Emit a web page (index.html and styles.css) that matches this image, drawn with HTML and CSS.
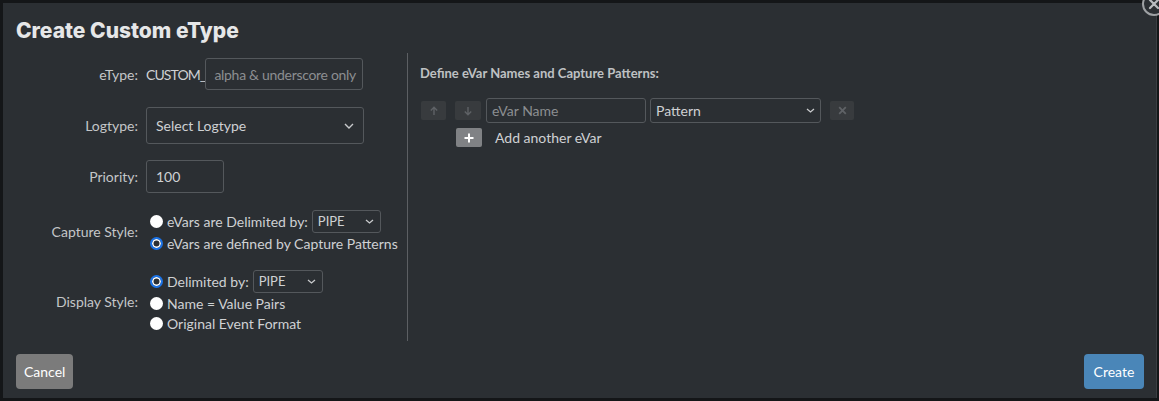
FILE: index.html
```html
<!DOCTYPE html>
<html>
<head>
<meta charset="utf-8">
<link rel="stylesheet" href="styles.css">
</head>
<body>
<div class="backdrop">
  <div class="modal">
    <span class="close-btn"><svg width="12" height="12" viewBox="0 0 12 12"><path d="M2 2L10 10M10 2L2 10" stroke="#b9bcbf" stroke-width="2.2" stroke-linecap="round"/></svg></span>
    <h1 class="title">Create Custom eType</h1>
    <div class="body">
      <div class="left">
        <div class="row r-etype">
          <div class="label">eType:</div>
          <div class="ctrl c-etype"><span class="prefix">CUSTOM_</span><div class="input w-etype placeholder">alpha &amp; underscore only</div></div>
        </div>
        <div class="row r-logtype">
          <div class="label">Logtype:</div>
          <div class="ctrl"><div class="select big w-logtype"><span>Select Logtype</span><svg width="10" height="6" viewBox="0 0 10 6"><path d="M1 1L5 5L9 1" fill="none" stroke="#c8cacc" stroke-width="1.4"/></svg></div></div>
        </div>
        <div class="row r-priority">
          <div class="label">Priority:</div>
          <div class="ctrl"><div class="input w-priority">100</div></div>
        </div>
        <div class="row r-capture">
          <div class="label">Capture Style:</div>
          <div class="ctrl stack">
            <div class="opt"><span class="radio"></span><span>eVars are Delimited by:</span><div class="select small w-pipe1"><span>PIPE</span><svg width="9" height="5" viewBox="0 0 9 5"><path d="M1 1L4.5 4L8 1" fill="none" stroke="#c8cacc" stroke-width="1.3"/></svg></div></div>
            <div class="opt"><span class="radio on"></span><span>eVars are defined by Capture Patterns</span></div>
          </div>
        </div>
        <div class="row r-display">
          <div class="label">Display Style:</div>
          <div class="ctrl stack">
            <div class="opt"><span class="radio on"></span><span>Delimited by:</span><div class="select small w-pipe2"><span>PIPE</span><svg width="9" height="5" viewBox="0 0 9 5"><path d="M1 1L4.5 4L8 1" fill="none" stroke="#c8cacc" stroke-width="1.3"/></svg></div></div>
            <div class="opt"><span class="radio"></span><span>Name = Value Pairs</span></div>
            <div class="opt"><span class="radio"></span><span>Original Event Format</span></div>
          </div>
        </div>
      </div>
      <div class="divider"></div>
      <div class="right">
        <div class="heading">Define eVar Names and Capture Patterns:</div>
        <div class="evar-row">
          <span class="sbtn"><svg width="10" height="10" viewBox="0 0 10 10"><path d="M5 9V1.5M1.8 4.5L5 1.3L8.2 4.5" fill="none" stroke="#5f6266" stroke-width="1.4"/></svg></span>
          <span class="sbtn"><svg width="10" height="10" viewBox="0 0 10 10"><path d="M5 1V8.5M1.8 5.5L5 8.7L8.2 5.5" fill="none" stroke="#5f6266" stroke-width="1.4"/></svg></span>
          <div class="input evar placeholder">eVar Name</div>
          <div class="select pattern"><span>Pattern</span><svg width="9" height="5" viewBox="0 0 9 5"><path d="M1 1L4.5 4L8 1" fill="none" stroke="#c8cacc" stroke-width="1.3"/></svg></div>
          <span class="sbtn xbtn"><svg width="9" height="9" viewBox="0 0 9 9"><path d="M1.2 1.2L7.8 7.8M7.8 1.2L1.2 7.8" stroke="#5f6266" stroke-width="1.8"/></svg></span>
        </div>
        <div class="add-row">
          <span class="plus"><svg width="10" height="10" viewBox="0 0 10 10"><path d="M5 0.5V9.5M0.5 5H9.5" stroke="#ffffff" stroke-width="2"/></svg></span>
          <span class="add-text">Add another eVar</span>
        </div>
      </div>
    </div>
    <div class="footer">
      <button class="btn cancel">Cancel</button>
      <button class="btn create">Create</button>
    </div>
  </div>
</div>
</body>
</html>
```
FILE: styles.css
```css
* { box-sizing: border-box; }
html, body { margin: 0; padding: 0; }
body {
  width: 1159px;
  height: 401px;
  overflow: hidden;
  background: #141618;
  font-family: "Source Sans Pro", "Lato", "Liberation Sans", sans-serif;
  font-size: 14px;
  color: #cfd1d3;
}
.backdrop { padding: 3px 2px 3px 3px; height: 401px; }
.modal {
  position: relative;
  height: 395px;
  background: #2b2f33;
  border-right: 1px solid #3a3e42;
  display: flex;
  flex-direction: column;
}
.close-btn {
  position: absolute;
  right: -10px;
  top: -11px;
  width: 24px;
  height: 24px;
  border-radius: 50%;
  border: 2px solid #9ea1a4;
  background: #2b2f33;
  display: flex;
  align-items: center;
  justify-content: center;
}
.title {
  margin: 0;
  padding: 15px 0 0 13px;
  height: 47px;
  font-family: "Inter", "Liberation Sans", sans-serif;
  font-weight: 800;
  font-size: 21px;
  letter-spacing: 0px;
  color: #e6e7e8;
}
.body { display: flex; height: 291px; }
.left { width: 404px; padding-top: 8px; }
.row { display: flex; align-items: center; }
.label { width: 143px; text-align: right; padding-right: 8px; color: #c4c6c8; }
.ctrl { display: flex; align-items: center; }
.c-etype { width: 217px; }
.prefix { margin-right: 0; color: #cfd1d3; letter-spacing: -0.9px; }
.input, .select {
  border: 1px solid #54585c;
  border-radius: 3px;
  background: #2b2f33;
  display: flex;
  align-items: center;
  padding: 0 9px;
  color: #cfd1d3;
  white-space: nowrap;
  overflow: hidden;
}
.placeholder { color: #8b8e91; }
.w-etype { flex: 1; height: 32px; padding: 0 6px 0 8px; letter-spacing: -0.3px; }
.w-logtype { width: 218px; height: 37px; justify-content: space-between; padding: 0 9px; }
.w-priority { width: 78px; height: 33px; }
.r-etype { height: 32px; }
.r-logtype { margin-top: 17px; }
.r-priority { margin-top: 16px; }
.r-capture { margin-top: 16px; }
.r-display { margin-top: 16px; }
.stack { flex-direction: column; align-items: flex-start; }
.opt { display: flex; align-items: center; height: 20px; white-space: nowrap; }
.r-capture .opt:first-child { height: 24px; }
.r-display .opt:first-child { height: 24px; margin-bottom: 0; }
.radio {
  width: 13px; height: 13px; border-radius: 50%;
  background: #ffffff;
  margin-right: 4px;
  margin-left: 4px;
  flex: none;
}
.radio.on {
  background: #2b2f33;
  border: 2px solid #1a73e8;
  box-shadow: inset 0 0 0 1.5px #ffffff;
}
.select.small { height: 23px; justify-content: space-between; padding: 0 6px 0 5px; margin-left: 4px; font-size: 13px; }
.w-pipe1 { width: 69px; }
.w-pipe2 { width: 70px; }
.divider { width: 1px; background: #5c5f63; margin-top: 3px; height: 288px; }
.right { padding-left: 12px; }
.heading { font-weight: 700; font-size: 13px; color: #bfc1c3; margin-top: 15px; }
.evar-row { display: flex; align-items: center; margin-top: 17px; height: 25px; }
.sbtn {
  width: 25px; height: 19px; border-radius: 2px; background: #383b3e;
  display: flex; align-items: center; justify-content: center; margin-left: 1px; margin-right: 9px;
}
.sbtn + .sbtn { margin-right: 5px; margin-left: 0; width: 26px; }
.input.evar { width: 160px; height: 25px; padding: 0 5px; }
.select.pattern { width: 171px; height: 25px; margin-left: 4px; justify-content: space-between; padding: 0 5px; }
.xbtn { margin-left: 9px; width: 24px; }
.add-row { display: flex; align-items: center; margin-top: 5px; padding-left: 36px; }
.plus {
  width: 26px; height: 19px; border-radius: 2px; background: #808285;
  display: flex; align-items: center; justify-content: center;
}
.add-text { margin-left: 13px; color: #cfd1d3; }
.footer { display: flex; justify-content: space-between; padding: 13px 12px 0 13px; }
.btn {
  border: none; border-radius: 4px; height: 35px; padding: 0 8px;
  font-family: "Source Sans Pro", "Lato", "Liberation Sans", sans-serif;
  font-size: 14px; color: #ffffff;
}
.cancel { background: #7b7b7b; width: 57px; }
.create { background: #4a86b8; width: 60px; }
```
